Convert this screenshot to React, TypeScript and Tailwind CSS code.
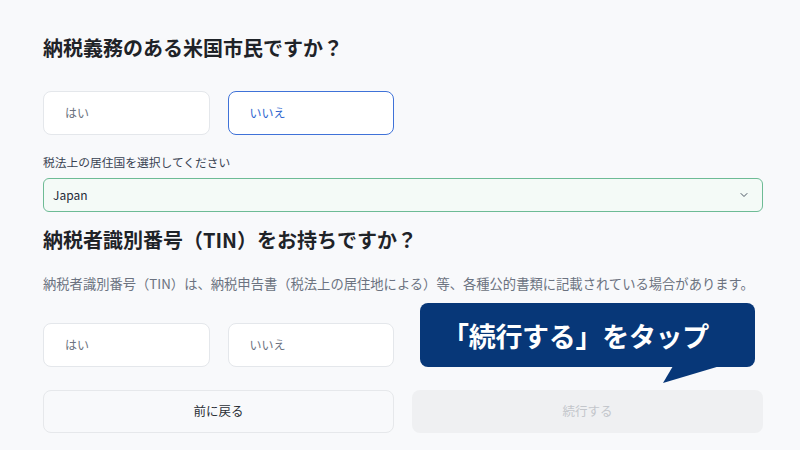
import { ChevronDown } from 'lucide-react';

const font = { fontFamily: '"Noto Sans CJK JP", "Noto Sans", sans-serif' };

function Choice({ label, selected = false }: { label: string; selected?: boolean }) {
  return (
    <div
      className={`h-[44px] rounded-lg bg-white flex items-center pl-[21px] text-[12px] ${
        selected
          ? 'border-[1.5px] border-[#3f72d8] text-[#2f66cf]'
          : 'border border-[#e4e7eb] text-[#6b7280]'
      }`}
    >
      {label}
    </div>
  );
}

export default function App() {
  return (
    <div className="relative w-[800px] h-[450px] overflow-hidden bg-[#f8f9fb]" style={font}>
      <div className="pl-[43px] pr-[37px] pt-[35px] flex flex-col">
        <h1 className="text-[20px] leading-[26px] font-bold text-[#1f2328]">
          納税義務のある米国市民ですか？
        </h1>

        <div className="grid grid-cols-4 gap-[18px] mt-[30px]">
          <Choice label="はい" />
          <Choice label="いいえ" selected />
        </div>

        <div className="mt-[19px] text-[11.75px] leading-[16px] text-[#374151]">
          税法上の居住国を選択してください
        </div>

        <div className="mt-[8px] h-[34px] rounded-md border border-[#6dbb95] bg-[#f4faf7] flex items-center justify-between pl-[9px] pr-[12px]">
          <span className="text-[12px] text-[#1f2937]">Japan</span>
          <ChevronDown size={12} strokeWidth={2} className="text-[#4b5563]" />
        </div>

        <h2 className="mt-[15px] text-[20px] leading-[26px] font-bold text-[#1f2328]">
          納税者識別番号（TIN）をお持ちですか？
        </h2>

        <p className="mt-[22px] text-[13.3px] leading-[18px] text-[#6b7280] whitespace-nowrap">
          納税者識別番号（TIN）は、納税申告書（税法上の居住地による）等、各種公的書類に記載されている場合があります。
        </p>

        <div className="grid grid-cols-4 gap-[18px] mt-[30px]">
          <Choice label="はい" />
          <Choice label="いいえ" />
        </div>

        <div className="grid grid-cols-2 gap-[18px] mt-[23px]">
          <button className="h-[43px] rounded-lg border border-[#e6e8eb] bg-[#f8f9fb] text-[12.5px] text-[#2a2f36]">
            前に戻る
          </button>
          <button className="h-[43px] rounded-lg bg-[#eff0f2] text-[12.5px] text-[#c3c6cb]">
            続行する
          </button>
        </div>
      </div>

      <div className="absolute left-[420px] top-[303px] w-[335px] h-[64px] rounded-lg bg-[#073778] flex items-center pl-[22px]">
        <span className="text-[27px] font-bold text-white leading-none tracking-[-0.3px]">
          「続行する」をタップ
        </span>
      </div>
      <svg className="absolute left-[660px] top-[366px]" width="64" height="20" viewBox="0 0 64 20">
        <polygon points="13,0 60,0 3,17" fill="#073778" />
      </svg>
    </div>
  );
}
